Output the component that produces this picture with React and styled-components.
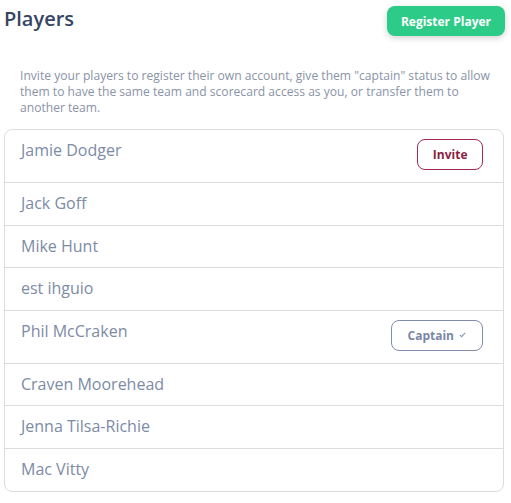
import React from "react";
import styled, { createGlobalStyle } from "styled-components";

const GlobalStyle = createGlobalStyle`
  body {
    margin: 0;
    background: #fff;
    font-family: "Open Sans", "Liberation Sans", sans-serif;
  }
`;

const Page = styled.div`
  width: 500px;
  padding: 6px 6px 0 4px;
`;

const Header = styled.div`
  display: flex;
  justify-content: space-between;
  align-items: flex-start;
`;

const Title = styled.h1`
  margin: -1px 0 0 0;
  font-size: 20px;
  font-weight: 600;
  color: #364563;
  line-height: 28px;
`;

const PrimaryButton = styled.button`
  height: 30px;
  margin-right: -1px;
  padding: 0 14px;
  border: none;
  border-radius: 8px;
  background: #2dcb88;
  color: #fff;
  font-family: inherit;
  font-size: 12px;
  font-weight: 700;
  box-shadow: 0 2px 6px rgba(0, 0, 0, 0.18);
  cursor: pointer;
`;

const Description = styled.p`
  margin: 32px 0 0 0;
  padding: 0 6px 0 16px;
  font-size: 12.1px;
  line-height: 16px;
  color: #8a93a7;
`;

const List = styled.ul`
  list-style: none;
  margin: 13px 0 0 0;
  padding: 0 0 1px 0;
  border: 1px solid #dcdde0;
  border-radius: 8px;
`;

const Row = styled.li`
  display: flex;
  justify-content: space-between;
  align-items: flex-start;
  padding: 9px 20px 10px 16px;
  border-top: ${(p) => (p.$first ? "none" : "1px solid #dcdde0")};
`;

const Name = styled.span`
  padding-top: 1px;
  font-size: 16px;
  line-height: 21.5px;
  color: #7d8ba6;
`;

const OutlineButton = styled.button`
  height: 31px;
  margin-bottom: 2px;
  padding: 0 ${(p) => p.$pad}px;
  border: 1px solid ${(p) => p.$color};
  border-radius: 8px;
  background: #fff;
  color: ${(p) => p.$text};
  font-family: inherit;
  font-size: 12px;
  font-weight: 700;
  display: flex;
  align-items: center;
  gap: 5px;
  cursor: pointer;
`;

const Check = () => (
  <svg width="7" height="6" viewBox="0 0 7 6" fill="none">
    <path d="M0.8 2.8 L2.6 4.6 L6.2 0.8" stroke="#8a96b0" strokeWidth="1.1" />
  </svg>
);

const players = [
  { name: "Jamie Dodger", action: "invite" },
  { name: "Jack Goff" },
  { name: "Mike Hunt" },
  { name: "est ihguio" },
  { name: "Phil McCraken", action: "captain" },
  { name: "Craven Moorehead" },
  { name: "Jenna Tilsa-Richie" },
  { name: "Mac Vitty" },
];

export default function App() {
  return (
    <Page>
      <GlobalStyle />
      <Header>
        <Title>Players</Title>
        <PrimaryButton>Register Player</PrimaryButton>
      </Header>
      <Description>
        Invite your players to register their own account, give them "captain"
        status to allow them to have the same team and scorecard access as you,
        or transfer them to another team.
      </Description>
      <List>
        {players.map((p, i) => (
          <Row key={p.name} $first={i === 0}>
            <Name>{p.name}</Name>
            {p.action === "invite" && (
              <OutlineButton $color="#a32a4c" $text="#8c1f40" $pad={14.5}>
                Invite
              </OutlineButton>
            )}
            {p.action === "captain" && (
              <OutlineButton $color="#7f8cab" $text="#7a88a6" $pad={16}>
                Captain <Check />
              </OutlineButton>
            )}
          </Row>
        ))}
      </List>
    </Page>
  );
}
